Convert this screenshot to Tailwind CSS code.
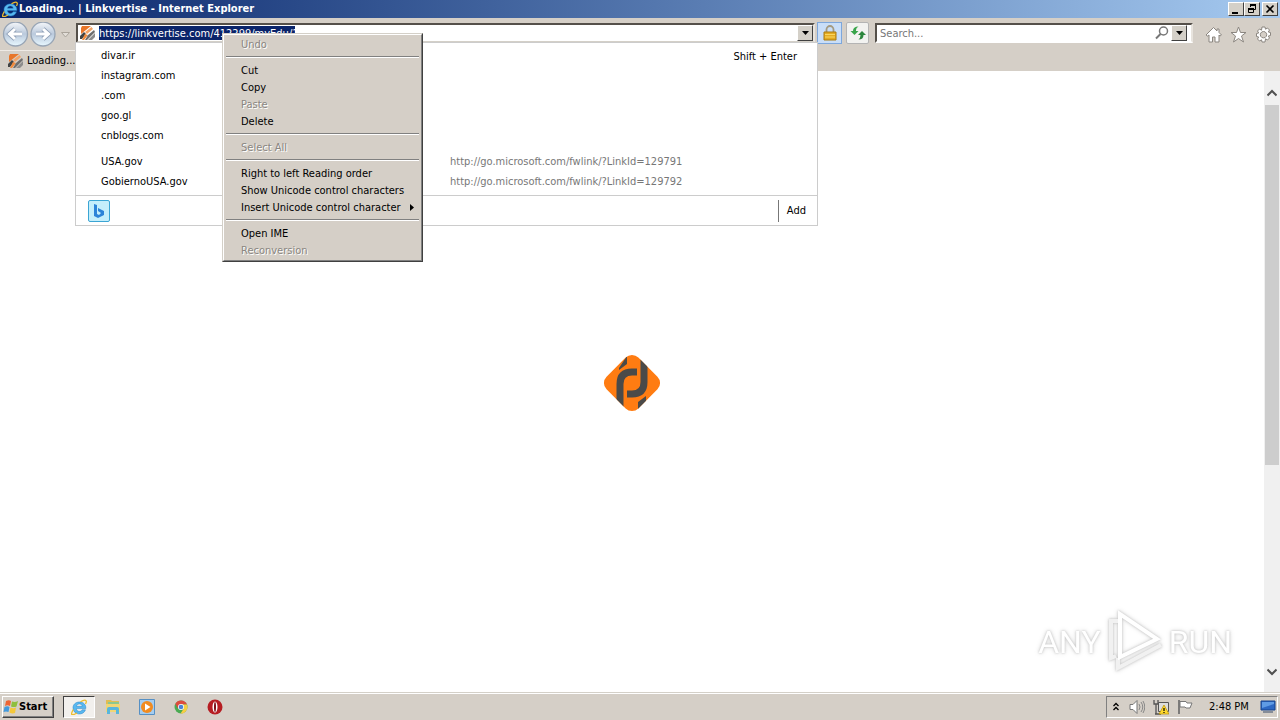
<!DOCTYPE html>
<html lang="en">
<head>
<meta charset="utf-8">
<title>Loading... | Linkvertise - Internet Explorer</title>
<script src="https://cdn.jsdelivr.net/npm/@tailwindcss/browser@4"></script>
</head>
<body class="flex h-screen flex-col overflow-hidden bg-white font-['Tahoma','DejaVu_Sans_Condensed','Noto_Sans',sans-serif] text-[11px] leading-4 text-black">
<svg class="hidden">
  <symbol id="ie" viewBox="0 0 16 16">
    <path d="M14.800 9.600H5.400c.2 3.500 4.800 3.600 5.700 1.200h3.400C12.600 17 2 16.300 2 8.800 2 1 15.600.8 14.800 9.600ZM5.500 7.300h5.700c-.3-3.200-5.200-3.200-5.700 0Z" fill="#58b8ef" stroke="#2480c8" stroke-width=".5" fill-rule="evenodd"/>
    <path d="M2.300 10.500C-2 18 3 15.800 6 14M9.500 2.800C14 0 16.800.8 14.500 5" fill="none" stroke="#edbd2c" stroke-width="1.300"/>
  </symbol>
  <symbol id="fav" viewBox="0 0 16 16">
    <path d="M3 1h9L2 9V3Z" fill="#e8762a"/><path d="M12.500 2 14 4 8 9l-2-2Z" fill="#f3a468"/><path d="m1 11 4-4 2 2-4 5H1Z" fill="#434343"/><path d="m6 9 3 1-4 5H3Z" fill="#f08a3c"/><path d="m15 5 1 2-8 8H6l3-5Z" fill="#6e6e6e"/><path d="m16 8v4l-3 3H9Z" fill="#8c8c8c"/>
  </symbol>
</svg>

<header class="flex h-[18px] shrink-0 items-center bg-linear-to-r from-[#0a246a] to-[#a6caf0] pl-[2px] pr-[2px]">
  <svg class="h-4 w-4"><use href="#ie"/></svg>
  <h1 class="ml-px flex-1 font-bold text-white">Loading... | Linkvertise - Internet Explorer</h1>
  <button aria-label="Minimize" class="h-[14px] w-4 border border-t-white border-l-white border-r-[#404040] border-b-[#404040] bg-[#d4d0c8]"><svg viewBox="0 0 14 12" class="h-3 w-[14px]"><path d="M3 9h6v2H3z"/></svg></button>
  <button aria-label="Restore" class="h-[14px] w-4 border border-t-white border-l-white border-r-[#404040] border-b-[#404040] bg-[#d4d0c8]"><svg viewBox="0 0 14 12" class="h-3 w-[14px]"><path d="M5 1h6v2H5zM3 5h6v2H3z"/><path d="M5.500 4V1.500h5v5H9M3.500 5.500h5v4h-5z" fill="none" stroke="#000"/></svg></button>
  <button aria-label="Close" class="ml-[2px] h-[14px] w-4 border border-t-white border-l-white border-r-[#404040] border-b-[#404040] bg-[#d4d0c8]"><svg viewBox="0 0 14 12" class="h-3 w-[14px]"><path d="m3.500 2.500 7 7m0-7-7 7" stroke="#000" stroke-width="1.600"/></svg></button>
</header>

<div class="relative z-10 h-[53px] shrink-0 bg-[#d5cfc7]">
  <div class="flex h-8 items-start pt-1">
    <nav class="flex w-[76px] shrink-0 items-center">
      <button aria-label="Back" class="ml-[2px]"><svg class="h-[26px] w-[27px]" viewBox="0 0 27 26"><defs><linearGradient id="orb" x2="0" y2="1"><stop stop-color="#f5f7fa"/><stop offset=".5" stop-color="#bac9dc"/><stop offset="1" stop-color="#e8f8ff"/></linearGradient></defs><circle cx="13.500" cy="12" r="12" fill="url(#orb)" stroke="#98a5b5" stroke-width="1.300"/><path d="M20 12H8m5-5-5.500 5 5.500 5" fill="none" stroke="#8c9db4" stroke-width="4.500"/><path d="M20 12H8m5-5-5.500 5 5.500 5" fill="none" stroke="#fff" stroke-width="3"/></svg></button>
      <button aria-label="Forward"><svg class="h-[26px] w-[27px]" viewBox="0 0 27 26"><circle cx="14" cy="12" r="12" fill="url(#orb)" stroke="#98a5b5" stroke-width="1.300"/><path d="M7 12h12m-5-5 5.500 5-5.500 5" fill="none" stroke="#8c9db4" stroke-width="4.500"/><path d="M7 12h12m-5-5 5.500 5-5.500 5" fill="none" stroke="#fff" stroke-width="3"/></svg></button>
      <button aria-label="Recent pages" class="ml-[5px]"><svg class="h-[6px] w-[9px]" viewBox="0 0 9 6"><path d="M.5.500h8l-4 4.500Z" fill="#e2ded8" stroke="#aaa49b"/></svg></button>
    </nav>
    <div class="relative mt-px min-w-0 flex-1">
      <div class="flex h-5 items-center border-2 border-t-[#55504a] border-l-[#55504a] border-r-[#e8e4de] border-b-[#d4d0c8] bg-white">
        <svg class="ml-px h-4 w-4 shrink-0"><use href="#fav"/></svg>
        <input aria-label="Address" value="https://linkvertise.com/412299/myEdu/1" class="ml-1 h-[14px] w-[196px] bg-[#0a246a] pt-px text-[11px] text-white outline-none">
        <span class="flex-1"></span>
        <button aria-label="Show address list" class="flex h-4 w-4 items-center justify-center border border-t-white border-l-white border-r-[#404040] border-b-[#404040] bg-[#d4d0c8]"><svg class="h-1 w-[7px]" viewBox="0 0 7 4"><path d="M0 0h7L3.500 4Z"/></svg></button>
      </div>
      <div class="absolute top-[19px] -left-px -right-[3px] h-[184px] border border-[#ccc] bg-white">
        <div class="relative pt-[3px]">
          <ul class="pl-[25px] leading-5">
            <li><a href="#">divar.ir</a></li><li><a href="#">instagram.com</a></li><li><a href="#">.com</a></li><li><a href="#">goo.gl</a></li><li><a href="#">cnblogs.com</a></li>
          </ul>
          <span class="absolute top-[6px] right-5">Shift + Enter</span>
        </div>
        <ul class="mt-[6px] h-[44px] border-b border-[#ccc] pl-[25px] leading-5">
          <li><a href="#" class="flex"><span class="w-[349px]">USA.gov</span><span class="text-[#777]">http://go.microsoft.com/fwlink/?LinkId=129791</span></a></li>
          <li><a href="#" class="flex"><span class="w-[349px]">GobiernoUSA.gov</span><span class="text-[#777]">http://go.microsoft.com/fwlink/?LinkId=129792</span></a></li>
        </ul>
        <div class="flex h-[30px] items-center justify-between pl-3">
          <button aria-label="Bing" class="rounded-xs border border-[#3ba5d4] bg-[#c4eefb]"><svg class="h-5 w-5" viewBox="0 0 20 20"><path d="m5 3 3 1v9l2 1 2-2-3-2V7l6 3v4l-6 3-4-2Z" fill="#2c83d8"/></svg></button>
          <button class="h-[22px] border-l border-[#777] pr-[11px] pl-2">Add</button>
        </div>
      </div>
      <div role="menu" class="absolute top-[10px] left-[146px] flex h-[229px] w-[201px] flex-col border border-t-[#d4d0c8] border-l-[#d4d0c8] border-r-[#404040] border-b-[#404040] bg-[#d5cfc7] leading-[17px]">
        <div class="flex h-full flex-col border border-t-white border-l-white border-r-[#808080] border-b-[#808080] px-px pt-px">
          <button role="menuitem" disabled class="pl-4 text-left text-[#8a8681] [text-shadow:1px_1px_0_#fff]">Undo</button>
          <hr class="mx-px mt-[3px] mb-1 h-[2px] border-t border-b border-t-[#808080] border-b-white">
          <button role="menuitem" class="pl-4 text-left">Cut</button>
          <button role="menuitem" class="pl-4 text-left">Copy</button>
          <button role="menuitem" disabled class="pl-4 text-left text-[#8a8681] [text-shadow:1px_1px_0_#fff]">Paste</button>
          <button role="menuitem" class="pl-4 text-left">Delete</button>
          <hr class="mx-px mt-[3px] mb-1 h-[2px] border-t border-b border-t-[#808080] border-b-white">
          <button role="menuitem" disabled class="pl-4 text-left text-[#8a8681] [text-shadow:1px_1px_0_#fff]">Select All</button>
          <hr class="mx-px mt-[3px] mb-1 h-[2px] border-t border-b border-t-[#808080] border-b-white">
          <button role="menuitem" class="pl-4 text-left whitespace-nowrap">Right to left Reading order</button>
          <button role="menuitem" class="pl-4 text-left whitespace-nowrap">Show Unicode control characters</button>
          <button role="menuitem" class="flex items-center justify-between pr-[6px] pl-4 whitespace-nowrap">Insert Unicode control character<svg class="h-[7px] w-1" viewBox="0 0 4 7"><path d="M0 0v7l4-3.500Z"/></svg></button>
          <hr class="mx-px mt-[3px] mb-1 h-[2px] border-t border-b border-t-[#808080] border-b-white">
          <button role="menuitem" class="pl-4 text-left">Open IME</button>
          <button role="menuitem" disabled class="pl-4 text-left text-[#8a8681] [text-shadow:1px_1px_0_#fff]">Reconversion</button>
        </div>
      </div>
    </div>
    <button aria-label="Security report" class="ml-[2px] flex h-[22px] w-[25px] items-center justify-center border border-[#7da7dc] bg-[#c9def8]"><svg class="h-4 w-4" viewBox="0 0 16 16"><path d="M4.500 8V4.500a3.500 3.500 0 0 1 7 0V8" fill="none" stroke="#a49a80" stroke-width="1.800"/><path d="M2 7h12v8H2z" fill="#e5ac22" stroke="#a97b10"/><path d="M3 9.500h10M3 12h10" stroke="#f9d761"/></svg></button>
    <button aria-label="Refresh" class="ml-1 flex h-[22px] w-[23px] items-center justify-center rounded-xs border border-[#b4b4b4] bg-[#f2f2f0]"><svg class="h-4 w-4" viewBox="0 0 16 16"><path d="M8.500 1.500Q6 2.500 6 5v1h2.500L4.500 10 .5 6H3q0-4.500 5.500-4.500Z" fill="#38a44a"/><path d="M8.500 14.500q2-1 2-4.500H8l4-4 4 4h-2.500q0 4.500-5 4.500Z" fill="#2c863d"/></svg></button>
    <form class="mt-px ml-[6px] flex h-5 w-[318px] items-center border-2 border-t-[#55504a] border-l-[#55504a] border-r-[#e8e4de] border-b-white bg-white">
      <input aria-label="Search" placeholder="Search..." class="min-w-0 flex-1 bg-transparent pt-[2px] pl-[3px] text-[11px] outline-none placeholder:text-[#777]">
      <button aria-label="Go" class="mr-px"><svg class="h-4 w-4" viewBox="0 0 16 16"><circle cx="9.500" cy="6" r="4" fill="none" stroke="#777" stroke-width="1.500"/><path d="m6.500 9-4.500 4.500" stroke="#777" stroke-width="2"/></svg></button>
      <button aria-label="Search options" class="mr-1 flex h-4 w-4 items-center justify-center border border-t-white border-l-white border-r-[#404040] border-b-[#404040] bg-[#d4d0c8]"><svg class="h-1 w-[7px]" viewBox="0 0 7 4"><path d="M0 0h7L3.500 4Z"/></svg></button>
    </form>
    <div class="mt-1 mr-2 ml-3 flex gap-2 [&_path]:fill-white [&_path]:stroke-[#8b8680]">
      <button aria-label="Home"><svg class="h-[18px] w-[17px]" viewBox="0 0 17 18"><path d="M8.500 1.500 1 9l1.500 1L4 9v7h3.500v-5h2.500v5H14V9l1 1 1.500-1L14 6.500V3h-2v2Z"/></svg></button>
      <button aria-label="Favorites"><svg class="h-[18px] w-[17px]" viewBox="0 0 17 18"><path d="m8.500 1 2 5.500h5.500l-4.500 3.500 2 6-5-3.500-5 3.500 2-6L1 6.500h5.500Z"/></svg></button>
      <button aria-label="Tools"><svg class="h-[18px] w-[17px]" viewBox="0 0 17 18"><path fill-rule="evenodd" d="M7 1h3l.5 2.200 2-1.200 2 2-1.200 2 2.200.5v3l-2.200.5 1.200 2-2 2-2-1.200L10 16H7l-.5-2.200-2 1.200-2-2 1.200-2L1.500 10.500v-3L3.700 7 2.500 5l2-2 2 1.200ZM8.500 5.500a3.200 3.200 0 1 0 .01 0Z"/></svg></button>
    </div>
  </div>
  <div class="flex h-[21px] w-[75px] items-center border-t border-[#eeeae5] pl-[7px]">
    <svg class="mr-1 h-4 w-4 shrink-0"><use href="#fav"/></svg><a href="#">Loading...</a>
  </div>
</div>

<main class="flex min-h-0 flex-1">
  <div class="relative flex flex-1 items-center justify-center pt-[2px]">
    <svg class="h-[58px] w-[58px]" viewBox="0 0 58 58" role="img" aria-label="Linkvertise">
      <defs><clipPath id="dia"><rect x="6.500" y="6.500" width="45" height="45" rx="9" transform="rotate(45 29 29)"/></clipPath></defs>
      <g clip-path="url(#dia)"><path d="M0 0h58v58H0z" fill="#ff7c12"/>
      <g fill="none" stroke="#4a4a49" stroke-width="7"><path d="M17 53V30q0-12 12-12h5M41 3v25q0 12-12 12h-5"/></g>
      <path d="M16 14 24 2v8l-8 6ZM35 48l8-6v6l-8 10Z" fill="#4a4a49"/></g>
    </svg>
    <div class="absolute right-8 bottom-[18px] flex items-center gap-[5px] font-['Roboto','Liberation_Sans',sans-serif] text-[32px] leading-none text-white [filter:drop-shadow(0_0_1px_#c4c4c4)_drop-shadow(0_0_2px_#dddddd)]">
      <span>ANY</span>
      <svg class="h-[64px] w-[58px]" viewBox="0 0 58 64" fill="none" stroke-width="4"><path d="M12 48v10l43-23M12 11H5v37l5-2" stroke="#f1f1f1"/><path d="M14 4v43l37-18Z" stroke="#fff"/></svg>
      <span>RUN</span>
    </div>
  </div>
  <div class="flex w-4 flex-col items-center bg-[#f0f0f0]">
    <button aria-label="Scroll up" class="mt-[14px] mb-1 h-4"><svg class="h-2 w-[10px]" viewBox="0 0 10 8"><path d="m.5 6.500 4.500-4.500 4.500 4.500" fill="none" stroke="#505050" stroke-width="2"/></svg></button>
    <div class="h-[58%] w-[14px] bg-[#cdcdcd]"></div>
    <button aria-label="Scroll down" class="mt-auto mb-3 h-4"><svg class="h-2 w-[10px]" viewBox="0 0 10 8"><path d="M.5 1.500 5 6l4.500-4.500" fill="none" stroke="#505050" stroke-width="2"/></svg></button>
  </div>
</main>

<footer class="flex h-7 shrink-0 items-center border-t border-[#d4d0c8] bg-[#d5cfc7] pr-[2px] pl-[2px] shadow-[inset_0_1px_0_#fff]">
  <button class="flex h-[22px] w-[52px] items-center border border-t-white border-l-white border-r-[#404040] border-b-[#404040] font-bold shadow-[inset_-1px_-1px_0_#808080]">
    <svg class="h-4 w-4 shrink-0" viewBox="0 0 16 16"><path d="M3 2q3-1.500 5 0L7 7Q4.500 5.500 2 7Z" fill="#ed6434"/><path d="M9 2.500q3 1 6-.500l-1.500 5.500Q11 8.500 8 7.500Z" fill="#8fbf3f"/><path d="M1.500 8q3-1.500 5 0l-1 5Q3 12 .5 13Z" fill="#4299dd"/><path d="M7.500 8.500q3 1.500 5.500 0L12 14q-3 1-5.500-.5Z" fill="#f4c83b"/></svg>Start
  </button>
  <button aria-label="Internet Explorer" class="ml-[9px] flex h-[22px] w-8 items-center justify-center border border-t-[#404040] border-l-[#404040] border-r-white border-b-white bg-[#f2f0ed]"><svg class="h-4 w-4"><use href="#ie"/></svg></button>
  <div class="ml-[10px] flex gap-[18px]">
    <button aria-label="Windows Explorer"><svg class="h-4 w-4" viewBox="0 0 16 16"><path d="M1 1h5l1 1h7v11H1Z" fill="#e0bd53"/><path d="M3 3h11v4H3z" fill="#8dc88e"/><path d="M1 5h14v8H1Z" fill="#f0d675"/><path d="M2 15v-5q0-2 2-2h8q2 0 2 2v5h-3v-4H5v4Z" fill="#58b6dc"/></svg></button>
    <button aria-label="Media Player"><svg class="h-4 w-4" viewBox="0 0 16 16"><path d="M.5.500h15v15H.5z" fill="#a5cdf0" stroke="#5690c4"/><circle cx="8" cy="8" r="6" fill="#f18b20"/><path d="m6 4.500 5.500 3.500L6 11.500Z" fill="#fff"/></svg></button>
    <button aria-label="Chrome"><svg class="h-4 w-4" viewBox="0 0 16 16"><circle cx="8" cy="8" r="6.500" fill="#4aaa52"/><path d="M2.300 4.800A6.500 6.500 0 0 1 14 5.500H8L5 9.500Z" fill="#dd4b3e"/><path d="M8 5.500h6A6.500 6.500 0 0 1 7.500 14.500L10.500 10Z" fill="#f7ce43"/><circle cx="8" cy="8" r="3" fill="#fff"/><circle cx="8" cy="8" r="2.300" fill="#4b83d5"/></svg></button>
    <button aria-label="Opera"><svg class="h-4 w-4" viewBox="0 0 16 16"><circle cx="8" cy="8" r="7.500" fill="#b61d22"/><ellipse cx="8" cy="8" rx="2.500" ry="5.500" fill="#fff"/><ellipse cx="8" cy="8" rx="1" ry="5" fill="#7d1118"/></svg></button>
  </div>
  <div class="ml-auto flex h-[22px] w-[172px] items-center border border-t-[#808080] border-l-[#808080] border-r-white border-b-white pl-[6px]">
    <button aria-label="Show hidden icons"><svg class="h-3 w-[6px]" viewBox="0 0 6 12"><path d="m.5 5 2.500-2.500L5.500 5m-5 4L3 6.500 5.500 9" fill="none" stroke="#000" stroke-width="1.300"/></svg></button>
    <svg class="ml-[10px] h-4 w-4" viewBox="0 0 16 16"><path d="M1 5.500h3l4-4v13l-4-4H1Z" fill="#fff" stroke="#777"/><path d="M10 5q2 3 0 6m2-8q3.500 5 0 10m2-11q3.500 6 0 12" fill="none" stroke="#888"/></svg>
    <svg class="ml-2 h-4 w-4" viewBox="0 0 16 16"><path d="M5.500 3.500h10v9h-10z" fill="#ddd" stroke="#555"/><path d="M1 1v4h4V1M3 5v10M2 15h6" fill="none" stroke="#555" stroke-width="1.300"/><path d="m11 6 5 9H6Z" fill="#ffd92e" stroke="#b88e00" stroke-width=".7"/><path d="M11 9v3m0 1v1" stroke="#000" stroke-width="1.200"/></svg>
    <svg class="ml-2 h-4 w-4" viewBox="0 0 16 16"><path d="M2 1v14" stroke="#666" stroke-width="1.600"/><path d="M3 2.500h6l1 1.500h5l-2 5H9l-1-1H3Z" fill="#fff" stroke="#777"/></svg>
    <time class="ml-4">2:48 PM</time>
    <svg class="mr-px ml-auto h-[14px] w-4" viewBox="0 0 16 14"><path d="M1 1h14v9H1z" fill="#2c67c2" stroke="#16438a"/><path d="M2 2h12v2L2 8Z" fill="#5f9be4"/><path d="M3 12h10" stroke="#6b7788" stroke-width="1.500"/></svg>
  </div>
</footer>
</body>
</html>
